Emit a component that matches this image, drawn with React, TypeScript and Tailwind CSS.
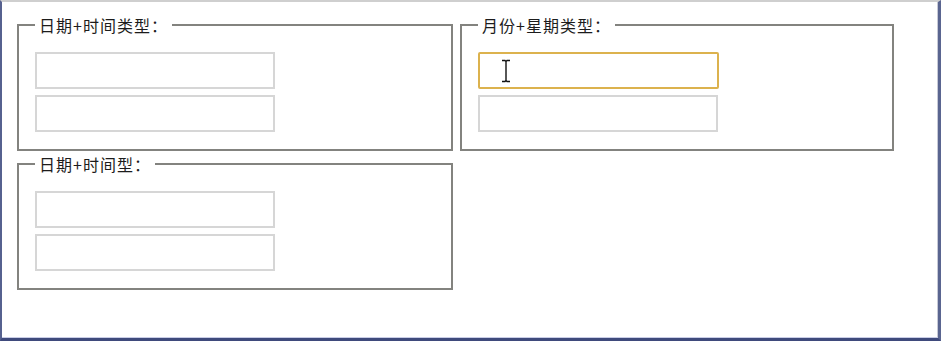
import React from 'react';

const groups = [
  { title: '日期+时间类型：', focus: false },
  { title: '月份+星期类型：', focus: true },
  { title: '日期+时间型：', focus: false },
];

function Group({ title, focus }: { title: string; focus: boolean }) {
  return (
    <fieldset className="border-2 border-[#83837f] pl-4 pt-[17px] pb-[17px]">
      <legend className="px-1 text-base leading-5 tracking-[1px] text-[#1c1c1c]">{title}</legend>
      <div className="flex flex-col gap-[6px]">
        <div className="relative">
          <input
            className={
              focus
                ? 'block h-[37px] w-[241px] rounded-[2px] border-2 border-[#dcb24e] bg-white outline-none'
                : 'block h-[37px] w-[240px] border-2 border-[#d6d6d6] bg-white outline-none'
            }
          />
          {focus && (
            // mouse pointer (text I-beam) hovering over the focused field
            <svg className="absolute left-[22px] top-[7px]" width="12" height="24" viewBox="0 0 12 24">
              <path d="M2 1.5h3l1 1 1-1h3M6 2.5v19M2 22.5h3l1-1 1 1h3" fill="none" stroke="#111" strokeWidth="1.4" />
            </svg>
          )}
        </div>
        <input className="block h-[37px] w-[240px] border-2 border-[#d6d6d6] bg-white outline-none" />
      </div>
    </fieldset>
  );
}

export default function App() {
  return (
    <div
      className="h-[341px] w-[941px] border-t-2 border-l-2 border-r-[3px] border-b-[3px] border-t-[#cfcfcf] border-l-[#56618f] border-r-[#5a6590] border-b-[#3f4a7c] bg-white"
      style={{ fontFamily: '"Noto Sans CJK SC", "Noto Sans", sans-serif' }}
    >
      <div className="h-full border-b border-r border-b-[#c9cde6] border-r-[#c7c9d6] pl-[15px] pt-[13px]">
        <div className="grid grid-cols-[436px_434px] gap-x-[7px] gap-y-[3px] items-start">
          {groups.map((g) => (
            <Group key={g.title} title={g.title} focus={g.focus} />
          ))}
        </div>
      </div>
    </div>
  );
}
